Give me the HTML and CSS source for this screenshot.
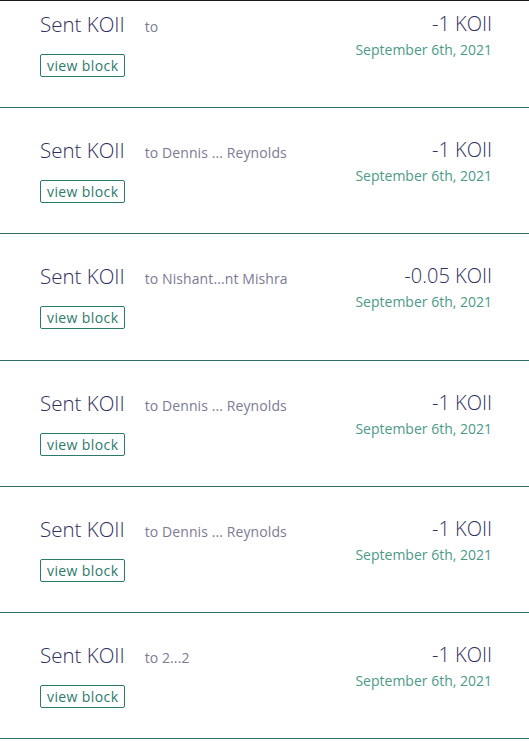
FILE: index.html
```html
<!DOCTYPE html>
<html>
<head>
<meta charset="utf-8">
<link rel="stylesheet" href="styles.css">
</head>
<body>
<div class="viewport">
  <ul class="activity-list">
    <li class="activity">
      <div class="info">
        <div class="title-line"><span class="title">Sent KOII</span><span class="to">to</span></div>
        <a class="view-block">view block</a>
      </div>
      <div class="meta">
        <div class="amount">-1 KOII</div>
        <div class="date">September 6th, 2021</div>
      </div>
    </li>
    <li class="activity">
      <div class="info">
        <div class="title-line"><span class="title">Sent KOII</span><span class="to">to Dennis ... Reynolds</span></div>
        <a class="view-block">view block</a>
      </div>
      <div class="meta">
        <div class="amount">-1 KOII</div>
        <div class="date">September 6th, 2021</div>
      </div>
    </li>
    <li class="activity">
      <div class="info">
        <div class="title-line"><span class="title">Sent KOII</span><span class="to">to Nishant...nt Mishra</span></div>
        <a class="view-block">view block</a>
      </div>
      <div class="meta">
        <div class="amount">-0.05 KOII</div>
        <div class="date">September 6th, 2021</div>
      </div>
    </li>
    <li class="activity">
      <div class="info">
        <div class="title-line"><span class="title">Sent KOII</span><span class="to">to Dennis ... Reynolds</span></div>
        <a class="view-block">view block</a>
      </div>
      <div class="meta">
        <div class="amount">-1 KOII</div>
        <div class="date">September 6th, 2021</div>
      </div>
    </li>
    <li class="activity">
      <div class="info">
        <div class="title-line"><span class="title">Sent KOII</span><span class="to">to Dennis ... Reynolds</span></div>
        <a class="view-block">view block</a>
      </div>
      <div class="meta">
        <div class="amount">-1 KOII</div>
        <div class="date">September 6th, 2021</div>
      </div>
    </li>
    <li class="activity">
      <div class="info">
        <div class="title-line"><span class="title">Sent KOII</span><span class="to">to 2...2</span></div>
        <a class="view-block">view block</a>
      </div>
      <div class="meta">
        <div class="amount">-1 KOII</div>
        <div class="date">September 6th, 2021</div>
      </div>
    </li>
  </ul>
</div>
</body>
</html>
```
FILE: styles.css
```css
* { box-sizing: border-box; }
html, body { margin: 0; padding: 0; background: #ffffff; }
body {
  font-family: "Open Sans", Lato, sans-serif;
  width: 529px;
  height: 741px;
  overflow: hidden;
}
.viewport {
  border-top: 1px solid #1b1b1b;
  height: 741px;
  overflow: hidden;
}
.activity-list {
  list-style: none;
  margin: -19px 0 0 0;
  padding: 0;
}
.activity {
  display: flex;
  justify-content: space-between;
  align-items: flex-start;
  height: 126.2px;
  padding: 30px 37px 0 40px;
  border-bottom: 1px solid #2f6e66;
}
.info {
  display: flex;
  flex-direction: column;
  align-items: flex-start;
  gap: 17px;
}
.title-line {
  display: flex;
  align-items: baseline;
  gap: 20px;
}
.title {
  font-size: 20.5px;
  line-height: 24px;
  color: #302e5e;
  font-weight: 300;
}
.to {
  font-size: 14px;
  letter-spacing: 0.1px;
  color: #7c7a94;
  margin-bottom: 1px;
}
.view-block {
  display: inline-block;
  border: 1px solid #2c7a6b;
  border-radius: 2px;
  color: #2c7a6b;
  font-size: 14px;
  line-height: 21px;
  padding: 0 6px;
  letter-spacing: 0.4px;
}
.meta {
  display: flex;
  flex-direction: column;
  align-items: flex-end;
  gap: 5px;
}
.amount {
  font-size: 20px;
  line-height: 24px;
  color: #302e5e;
  font-weight: 300;
}
.date {
  font-size: 14px;
  line-height: 18px;
  color: #4c9a88;
}
```
